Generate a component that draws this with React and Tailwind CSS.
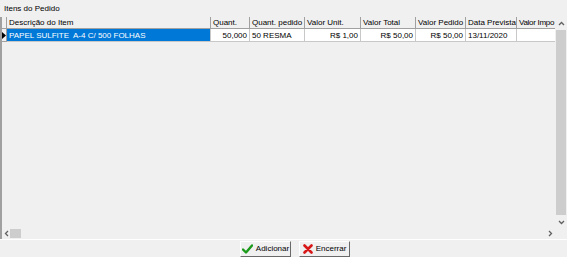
import React from "react";

const cols = [
  { w: 204, h: "Descrição do Item", v: "PAPEL SULFITE  A-4 C/ 500 FOLHAS", a: "l", sel: true },
  { w: 39, h: "Quant.", v: "50,000", a: "r" },
  { w: 55, h: "Quant. pedido", v: "50 RESMA", a: "l" },
  { w: 56, h: "Valor Unit.", v: "R$ 1,00", a: "r" },
  { w: 55, h: "Valor Total", v: "R$ 50,00", a: "r" },
  { w: 50, h: "Valor Pedido", v: "R$ 50,00", a: "r" },
  { w: 51, h: "Data Prevista", v: "13/11/2020", a: "l" },
  { w: 40, h: "Valor Impo", v: "", a: "l", last: true },
];

function Check() {
  return (
    <svg width="11" height="10" viewBox="0 0 11 10">
      <path d="M1 5.5 L4 8.5 L10 1.5" stroke="#1c9a1c" strokeWidth="2.4" fill="none" strokeLinecap="round" strokeLinejoin="round" />
    </svg>
  );
}

function Cross() {
  return (
    <svg width="10" height="10" viewBox="0 0 10 10">
      <path d="M1.5 1.5 L8.5 8.5 M8.5 1.5 L1.5 8.5" stroke="#d81818" strokeWidth="2.6" fill="none" strokeLinecap="round" />
    </svg>
  );
}

export default function App() {
  return (
    <div className="w-[567px] h-[257px] bg-[#f0f0f0] font-['Liberation_Sans',sans-serif] text-[8px] leading-[10px] text-black overflow-hidden flex flex-col">
      <div className="h-[17px] shrink-0 pl-[4px] pt-[4px] whitespace-nowrap">Itens do Pedido</div>
      <div className="h-[222px] shrink-0 flex flex-col border-l-2 border-[#a0a0a0]">
        <div className="flex flex-1 min-h-0">
          <div className="flex-1 min-w-0 overflow-hidden">
            <div className="flex h-[12px] whitespace-nowrap">
              <div className="w-[5px] shrink-0 border-r border-b border-[#a0a0a0] bg-[#f0f0f0]" />
              {cols.map((c, i) => (
                <div
                  key={i}
                  style={{ width: c.w }}
                  className={
                    "shrink-0 overflow-hidden border-r border-b border-[#a0a0a0] bg-[#f0f0f0] pl-[2px] pt-[1px] " +
                    (c.last ? "tracking-[-0.3px] pl-[1px]" : "")
                  }
                >
                  {c.h}
                </div>
              ))}
            </div>
            <div className="flex h-[13px] whitespace-pre">
              <div className="w-[5px] shrink-0 border-r border-b border-[#a0a0a0] bg-[#f0f0f0] flex items-center">
                <svg width="4" height="7" viewBox="0 0 4 7">
                  <path d="M0 0 L4 3.5 L0 7 Z" fill="#000" />
                </svg>
              </div>
              {cols.map((c, i) => (
                <div
                  key={i}
                  style={{ width: c.w }}
                  className={
                    "shrink-0 overflow-hidden border-r border-b border-[#c8c8c8] pt-[2px] " +
                    (c.a === "r" ? "text-right pr-[2px] " : "pl-[2px] ") +
                    (c.sel ? "bg-[#0078d7] text-white" : "bg-white")
                  }
                >
                  {c.v}
                </div>
              ))}
            </div>
          </div>
          <div className="w-[12px] shrink-0 flex flex-col bg-[#f0f0f0]">
            <div className="h-[12px] flex items-center justify-center">
              <svg width="7" height="5" viewBox="0 0 7 5">
                <path d="M1 4 L3.5 1.5 L6 4" stroke="#606060" strokeWidth="1.3" fill="none" />
              </svg>
            </div>
            <div className="flex-1 px-[1px] py-[1px]">
              <div className="h-full bg-[#cdcdcd]" />
            </div>
            <div className="h-[12px] flex items-center justify-center">
              <svg width="7" height="5" viewBox="0 0 7 5">
                <path d="M1 1 L3.5 3.5 L6 1" stroke="#606060" strokeWidth="1.3" fill="none" />
              </svg>
            </div>
          </div>
        </div>
        <div className="h-[11px] shrink-0 flex">
          <div className="flex-1 flex items-center bg-[#f0f0f0]">
            <div className="w-[8px] flex items-center justify-center">
              <svg width="5" height="7" viewBox="0 0 5 7">
                <path d="M4 1 L1.5 3.5 L4 6" stroke="#606060" strokeWidth="1.3" fill="none" />
              </svg>
            </div>
            <div className="w-[11px] h-[9px] bg-[#cdcdcd]" />
            <div className="flex-1" />
            <div className="w-[10px] flex items-center justify-center">
              <svg width="5" height="7" viewBox="0 0 5 7">
                <path d="M1 1 L3.5 3.5 L1 6" stroke="#606060" strokeWidth="1.3" fill="none" />
              </svg>
            </div>
          </div>
          <div className="w-[12px] bg-[#f0f0f0]" />
        </div>
      </div>
      <div className="h-px shrink-0 bg-white" />
      <div className="flex-1 flex items-start pl-[240px] gap-[8px] pt-[1px]">
        <div className="w-[51px] h-[16px] flex items-center justify-center gap-[3px] bg-[#f0f0f0] border border-t-white border-l-white border-r-[#696969] border-b-[#696969] text-[8px]">
          <Check />
          <span>Adicionar</span>
        </div>
        <div className="w-[51px] h-[16px] flex items-center justify-center gap-[3px] bg-[#f0f0f0] border border-t-white border-l-white border-r-[#696969] border-b-[#696969] text-[8px]">
          <Cross />
          <span>Encerrar</span>
        </div>
      </div>
    </div>
  );
}
